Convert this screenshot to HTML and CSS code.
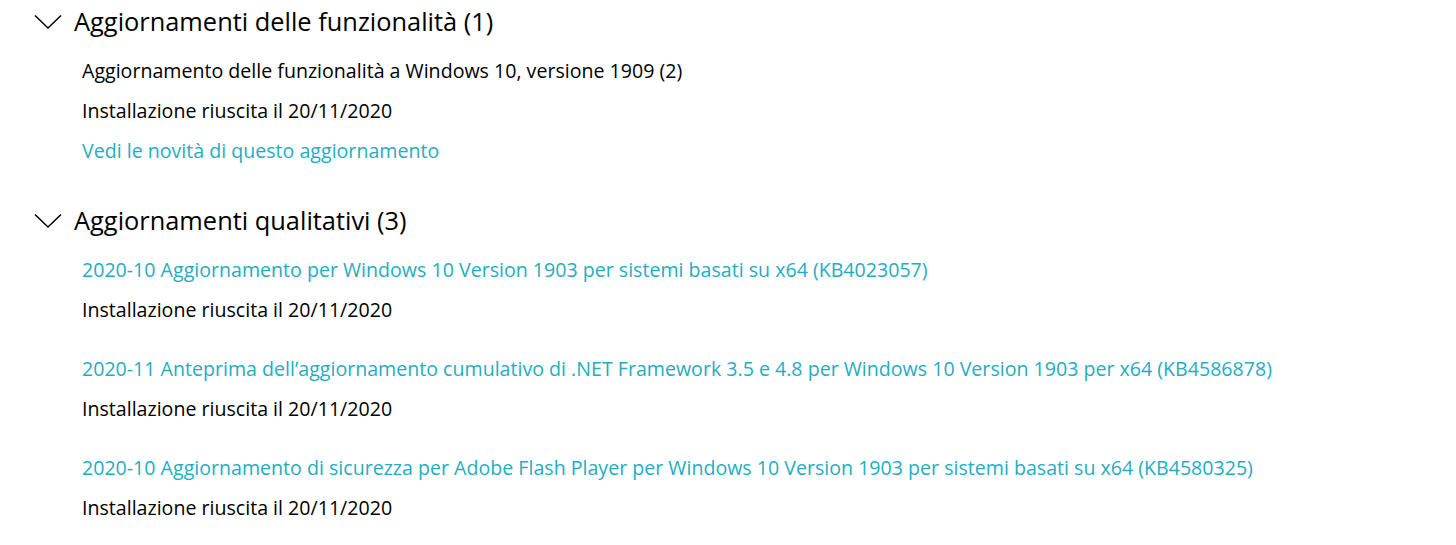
FILE: index.html
```html
<!DOCTYPE html>
<html lang="it">
<head>
<meta charset="utf-8">
<link rel="stylesheet" href="styles.css">
</head>
<body>
<div class="page">
  <section class="group">
    <div class="group-head">
      <svg class="chev" width="28" height="16" viewBox="0 0 28 16"><path d="M1 1.5 L14 14 L27 1.5" fill="none" stroke="#000" stroke-width="1.5"/></svg>
      <h2 class="group-title">Aggiornamenti delle funzionalità (1)</h2>
    </div>
    <div class="items">
      <div class="item">
        <div class="line">Aggiornamento delle funzionalità a Windows 10, versione 1909 (2)</div>
        <div class="line">Installazione riuscita il 20/11/2020</div>
        <div class="line link">Vedi le novità di questo aggiornamento</div>
      </div>
    </div>
  </section>
  <section class="group">
    <div class="group-head">
      <svg class="chev" width="28" height="16" viewBox="0 0 28 16"><path d="M1 1.5 L14 14 L27 1.5" fill="none" stroke="#000" stroke-width="1.5"/></svg>
      <h2 class="group-title">Aggiornamenti qualitativi (3)</h2>
    </div>
    <div class="items">
      <div class="item">
        <div class="line link">2020-10 Aggiornamento per Windows 10 Version 1903 per sistemi basati su x64 (KB4023057)</div>
        <div class="line">Installazione riuscita il 20/11/2020</div>
      </div>
      <div class="item">
        <div class="line link">2020-11 Anteprima dell’aggiornamento cumulativo di .NET Framework 3.5 e 4.8 per Windows 10 Version 1903 per x64 (KB4586878)</div>
        <div class="line">Installazione riuscita il 20/11/2020</div>
      </div>
      <div class="item">
        <div class="line link">2020-10 Aggiornamento di sicurezza per Adobe Flash Player per Windows 10 Version 1903 per sistemi basati su x64 (KB4580325)</div>
        <div class="line">Installazione riuscita il 20/11/2020</div>
      </div>
    </div>
  </section>
</div>
</body>
</html>
```
FILE: styles.css
```css
html, body {
  margin: 0;
  padding: 0;
  background: #fff;
}
body {
  font-family: "Open Sans", "Noto Sans", sans-serif;
  color: #000;
}
.page {
  padding: 0 0 0 34px;
}
.group-head {
  display: flex;
  align-items: center;
  height: 42px;
}
.chev {
  flex: none;
  margin-right: 12px;
  margin-top: 2px;
}
.group-title {
  margin: 0;
  font-weight: 400;
  font-size: 25.4px;
  line-height: 42px;
}
.items {
  padding-left: 48px;
  padding-top: 9px;
  display: flex;
  flex-direction: column;
  gap: 19px;
}
.group + .group {
  margin-top: 28px;
}
.line {
  font-size: 19.6px;
  line-height: 40px;
  white-space: nowrap;
}
.link {
  color: #24adc2;
}
```
